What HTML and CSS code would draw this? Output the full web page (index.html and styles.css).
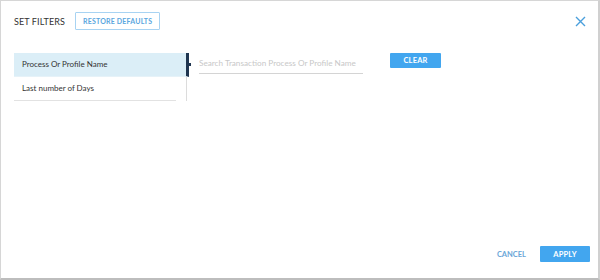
FILE: index.html
```html
<!DOCTYPE html>
<html lang="en">
  <head>
    <meta charset="utf-8">
    <title>Set Filters</title>
    <link rel="stylesheet" href="styles.css">
  </head>
  <body>
    <div class="dialog">
      <div class="header">
        <span class="title">SET FILTERS</span>
        <button class="btn-outline">RESTORE DEFAULTS</button>
        <span class="close">
          <svg width="11" height="11" viewBox="0 0 11 11">
            <path d="M1 1L10 10M10 1L1 10" stroke="#4a9fdc" stroke-width="1.4" fill="none"/>
          </svg>
        </span>
      </div>
      <div class="body">
        <ul class="filters">
          <li class="filter active">Process Or Profile Name</li>
          <li class="filter">Last number of Days</li>
        </ul>
        <div class="panel">
          <input class="search" type="text" placeholder="Search Transaction Process Or Profile Name">
          <button class="btn-solid clear">CLEAR</button>
        </div>
      </div>
      <div class="footer">
        <button class="btn-text">CANCEL</button>
        <button class="btn-solid apply">APPLY</button>
      </div>
    </div>
  </body>
</html>
```
FILE: styles.css
```css
html, body{
  margin:0;
  padding:0;
}
body{
  font-family: Lato, "Liberation Sans", sans-serif;
  color:#333;
  background:#fff;
}
.dialog{
  width:600px;
  height:280px;
  box-sizing:border-box;
  border:1px solid #d6d6d6;
  border-bottom:2px solid #bdbdbd;
  border-right:2px solid #d0d0d0;
  display:flex;
  flex-direction:column;
}
/*header*/
.header{
  display:flex;
  align-items:center;
  height:40px;
  padding:0 13px 0 13px;
}
.title{
  font-size:9px;
  letter-spacing:0.1px;
}
.btn-outline{
  margin-left:10px;
  height:18px;
  padding:0 7px;
  border:1px solid #a8d3f2;
  background:#fff;
  color:#5aa6de;
  font-family:inherit;
  font-size:7px;
  font-weight:bold;
  letter-spacing:0.2px;
  border-radius:1px;
}
.close{
  margin-left:auto;
  display:flex;
  margin-right:-1px;
}
/*body*/
.body{
  flex:1;
  display:flex;
  padding:12px 0 0 13px;
}
.filters{
  list-style:none;
  margin:0;
  padding:0;
  width:172px;
  border-right:1px solid #dcdcdc;
  height:48px;
}
.filter{
  height:23px;
  line-height:23px;
  padding-left:8px;
  font-size:8px;
  width:154px;
  border-bottom:1px solid #e2e2e2;
  position:relative;
}
.filter.active{
  background:#dbeef7;
  width:164px;
  border-bottom:1px solid #e6f2f8;
  border-right:3px solid #1f3550;
  margin-right:-1px;
}
.filter.active::after{
  content:"";
  position:absolute;
  right:-5px;
  top:10px;
  width:2px;
  height:3px;
  background:#1f3550;
}
.panel{
  display:flex;
  align-items:flex-start;
  padding-left:12px;
}
.search{
  width:164px;
  height:20px;
  border:none;
  border-bottom:1px solid #d4d4d4;
  padding:0;
  font-family:inherit;
  font-size:8.2px;
  outline:none;
}
.search::placeholder{
  color:#c8c8c8;
}
.btn-solid{
  border:none;
  background:#42a6ef;
  color:#fff;
  font-family:inherit;
  font-size:7.5px;
  font-weight:bold;
  letter-spacing:0.2px;
  border-radius:1px;
}
.clear{
  margin-left:27px;
  width:51px;
  height:15px;
}
/*footer*/
.footer{
  display:flex;
  justify-content:flex-end;
  align-items:center;
  height:28px;
  padding:0 8px 10px 0;
}
.btn-text{
  border:none;
  background:none;
  color:#6aa6d8;
  font-family:inherit;
  font-size:7.5px;
  font-weight:bold;
  margin-right:8px;
}
.apply{
  width:50px;
  height:16px;
}
```
